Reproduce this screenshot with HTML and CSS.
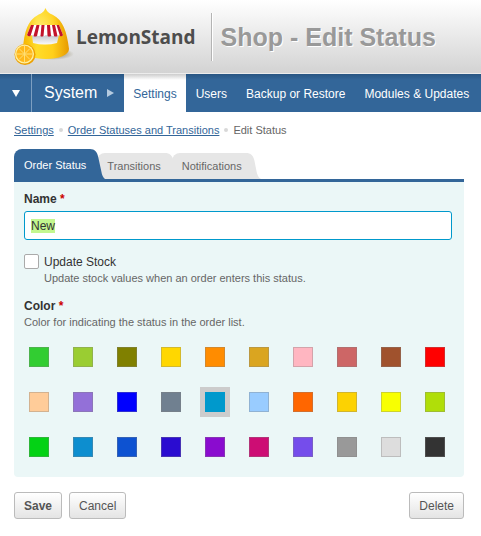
FILE: index.html
```html
<!DOCTYPE html>
<html lang="en">
<head>
<meta charset="utf-8">
<meta name="viewport" content="width=device-width, initial-scale=1">
<title>Shop - Edit Status</title>
<link rel="stylesheet" href="styles.css">
</head>
<body>
<header class="header">
  <a class="brand" href="#">
    <svg class="brand-icon" viewBox="0 5 64 64" aria-hidden="true">
      <defs>
        <linearGradient id="body" x1="0" x2="1" y1="0" y2="0">
          <stop offset="0" stop-color="#f6b400"/>
          <stop offset=".3" stop-color="#ffdc2a"/>
          <stop offset=".65" stop-color="#ffcf1a"/>
          <stop offset="1" stop-color="#e79a00"/>
        </linearGradient>
        <radialGradient id="shine" cx=".4" cy=".35" r=".4">
          <stop offset="0" stop-color="#fff9a8" stop-opacity=".5"/>
          <stop offset="1" stop-color="#fff27a" stop-opacity="0"/>
        </radialGradient>
        <linearGradient id="hatch" x1="0" x2="0" y1="0" y2="1">
          <stop offset="0" stop-color="#c4c4cc"/>
          <stop offset="1" stop-color="#fafafa"/>
        </linearGradient>
        <radialGradient id="shade">
          <stop offset="0" stop-color="#6b6030" stop-opacity=".8"/>
          <stop offset="1" stop-color="#6b6030" stop-opacity="0"/>
        </radialGradient>
      </defs>
      <ellipse cx="41" cy="54" rx="21" ry="6" fill="url(#shade)"/>
      <path d="M33.500 8C35 12 37 13 41 15C51 20 55 32 57 49C57 55 47 59 34 59S11 55 11 49C12 32 16 20 26 15C30 13 32 12 33.500 8Z" fill="url(#body)"/>
      <path d="M33.500 8C35 12 37 13 41 15C51 20 55 32 57 49C57 55 47 59 34 59S11 55 11 49C12 32 16 20 26 15C30 13 32 12 33.500 8Z" fill="url(#shine)"/>
      <path d="M20 35H47L45 43Q33 46 21 43Z" fill="url(#hatch)"/>
      <path d="M19 25H47L51 35Q49 37 47 35Q45 37 43 35Q41 37 39 35Q37 37 34 35Q32 37 29 35Q27 37 24 35Q22 37 20 35Q17 37 15 35Z" fill="#fff"/>
      <path d="M19 25H22L18.500 36Q16.500 37 15 35ZM24.500 25H27.500L25 36Q23 37 21.500 36ZM29.500 25H32.500L31.500 36Q29.500 37 28.500 36ZM35 25H38L39 36Q37 37 35.500 36ZM40 25H43L45.500 36Q43.500 37 42 36ZM44.500 25H47L51 35Q50 37 48 36Z" fill="#c3122b"/>
      <circle cx="13" cy="54.500" r="10.500" fill="#eda000"/>
      <circle cx="12.500" cy="54" r="9.500" fill="#fff0a0"/>
      <circle cx="12.500" cy="54" r="8.200" fill="#ffb81c"/>
      <path d="M12.500 46V62M4.500 54H20.500M7 48.500L18 59.500M18 48.500L7 59.500" stroke="#ffdf75" stroke-width="1"/>
    </svg>
    <span class="brand-name">LemonStand</span>
  </a>
  <h1 class="title">Shop - Edit Status</h1>
</header>
<nav class="nav" aria-label="System">
  <button class="nav-menu" type="button" aria-label="Menu"><svg width="8" height="7" viewBox="0 0 8 7"><path d="M0 0H8L4 7Z" fill="#fff"/></svg></button>
  <a class="nav-section" href="#">System <svg width="7" height="8" viewBox="0 0 7 8"><path d="M0 0L7 4L0 8Z" fill="#b5cbe0"/></svg></a>
  <div class="nav-links">
    <a class="nav-link nav-current" href="#">Settings</a>
    <a class="nav-link" href="#">Users</a>
    <a class="nav-link" href="#">Backup or Restore</a>
    <a class="nav-link" href="#">Modules &amp; Updates</a>
  </div>
</nav>
<main class="main">
  <nav class="crumbs" aria-label="Breadcrumb">
    <a href="#">Settings</a><i class="dot"></i><a href="#">Order Statuses and Transitions</a><i class="dot"></i><span>Edit Status</span>
  </nav>
  <div class="tabs">
    <a class="tab tab-active" href="#"><span class="tab-label">Order Status</span><svg class="tab-tail" viewBox="0 0 16 30" preserveAspectRatio="none"><path d="M0 0C5 0 8 3 9 9L12 22Q13 28 16 30H0Z"/></svg></a>
    <a class="tab" href="#"><span class="tab-label">Transitions</span><svg class="tab-tail" viewBox="0 0 16 30" preserveAspectRatio="none"><path d="M0 0C5 0 8 3 9 9L11 20Q12 28 16 30H0Z"/></svg></a>
    <a class="tab" href="#"><span class="tab-label">Notifications</span><svg class="tab-tail" viewBox="0 0 16 30" preserveAspectRatio="none"><path d="M0 0C5 0 8 3 9 9L11 20Q12 28 16 30H0Z"/></svg></a>
  </div>
  <form>
    <div class="panel">
      <label class="label" for="name">Name <b class="required">*</b></label>
      <input class="text-input" id="name" type="text" value="New" autofocus>
      <div class="check-row">
        <input class="check" id="stock" type="checkbox">
        <div>
          <label class="check-label" for="stock">Update Stock</label>
          <p class="help">Update stock values when an order enters this status.</p>
        </div>
      </div>
      <div class="label" id="color-label">Color <b class="required">*</b></div>
      <p class="help">Color for indicating the status in the order list.</p>
      <div class="swatches" role="radiogroup" aria-labelledby="color-label">
        <input class="swatch" type="radio" name="color" aria-label="#32cd32" style="--c:#32cd32">
        <input class="swatch" type="radio" name="color" aria-label="#9acd32" style="--c:#9acd32">
        <input class="swatch" type="radio" name="color" aria-label="#808000" style="--c:#808000">
        <input class="swatch" type="radio" name="color" aria-label="#ffd700" style="--c:#ffd700">
        <input class="swatch" type="radio" name="color" aria-label="#ff8c00" style="--c:#ff8c00">
        <input class="swatch" type="radio" name="color" aria-label="#daa520" style="--c:#daa520">
        <input class="swatch" type="radio" name="color" aria-label="#ffb6c1" style="--c:#ffb6c1">
        <input class="swatch" type="radio" name="color" aria-label="#cd6666" style="--c:#cd6666">
        <input class="swatch" type="radio" name="color" aria-label="#a0522d" style="--c:#a0522d">
        <input class="swatch" type="radio" name="color" aria-label="#ff0000" style="--c:#ff0000">
        <input class="swatch" type="radio" name="color" aria-label="#ffcc99" style="--c:#ffcc99">
        <input class="swatch" type="radio" name="color" aria-label="#9370d8" style="--c:#9370d8">
        <input class="swatch" type="radio" name="color" aria-label="#0000ff" style="--c:#0000ff">
        <input class="swatch" type="radio" name="color" aria-label="#708090" style="--c:#708090">
        <input class="swatch" type="radio" name="color" aria-label="#0099cc" style="--c:#0099cc" checked>
        <input class="swatch" type="radio" name="color" aria-label="#99ccff" style="--c:#99ccff">
        <input class="swatch" type="radio" name="color" aria-label="#ff6600" style="--c:#ff6600">
        <input class="swatch" type="radio" name="color" aria-label="#fcd202" style="--c:#fcd202">
        <input class="swatch" type="radio" name="color" aria-label="#f8ff01" style="--c:#f8ff01">
        <input class="swatch" type="radio" name="color" aria-label="#b0de09" style="--c:#b0de09">
        <input class="swatch" type="radio" name="color" aria-label="#04d215" style="--c:#04d215">
        <input class="swatch" type="radio" name="color" aria-label="#0d8ecf" style="--c:#0d8ecf">
        <input class="swatch" type="radio" name="color" aria-label="#0d52d1" style="--c:#0d52d1">
        <input class="swatch" type="radio" name="color" aria-label="#2a0cd0" style="--c:#2a0cd0">
        <input class="swatch" type="radio" name="color" aria-label="#8a0ccf" style="--c:#8a0ccf">
        <input class="swatch" type="radio" name="color" aria-label="#cd0d74" style="--c:#cd0d74">
        <input class="swatch" type="radio" name="color" aria-label="#754deb" style="--c:#754deb">
        <input class="swatch" type="radio" name="color" aria-label="#999999" style="--c:#999999">
        <input class="swatch" type="radio" name="color" aria-label="#dddddd" style="--c:#dddddd">
        <input class="swatch" type="radio" name="color" aria-label="#333333" style="--c:#333333">
      </div>
    </div>
    <div class="actions">
      <button class="button primary" type="submit">Save</button>
      <button class="button" type="button">Cancel</button>
      <button class="button delete" type="button">Delete</button>
    </div>
  </form>
</main>
<script src="script.js"></script>
</body>
</html>
```
FILE: styles.css
```css
* {
  box-sizing: border-box;
}

body {
  margin: 0;
  background: #fff;
  color: #333;
  font: 12px/16px "Liberation Sans", Arial, sans-serif;
}

a {
  color: #336699;
}

p {
  margin: 0;
}

.header {
  display: flex;
  align-items: center;
  height: 74px;
  padding-left: 12px;
  background: linear-gradient(#fff, #d3d3d3);
  border-bottom: 1px solid #ececec;
}

.brand {
  display: flex;
  align-items: center;
  color: #4d4d4d;
  text-decoration: none;
}

.brand-icon {
  width: 64px;
  height: 64px;
}

.brand-name {
  font: bold 19px/24px "Open Sans", "Noto Sans", sans-serif;
}

.title {
  margin: 0 0 0 15px;
  padding-left: 9px;
  border-left: 1px solid #b4b4b4;
  box-shadow: inset 1px 0 #fff;
  color: #999;
  font-size: 25px;
  line-height: 48px;
  text-shadow: 1px 1px #fff;
  white-space: nowrap;
}

.nav {
  display: flex;
  height: 38px;
  background: linear-gradient(#285582, #336699 6px);
  white-space: nowrap;
  overflow: hidden;
}

.nav-menu {
  width: 32px;
  padding: 0 0 2px;
  background: none;
  border: 0;
  border-right: 1px solid #7d9fc1;
}

.nav-section {
  display: flex;
  align-items: center;
  gap: 10px;
  padding: 0 10px 0 12px;
  color: #fff;
  font-size: 16px;
  text-decoration: none;
}

.nav-links {
  display: flex;
  gap: 1px;
}

.nav-link {
  padding: 0 9px;
  color: #fff;
  line-height: 40px;
  text-decoration: none;
}

.nav-current {
  background: linear-gradient(#ccc, #fff 6px);
  color: #336699;
}

.main {
  padding: 10px 17px 16px 14px;
}

.crumbs {
  display: flex;
  align-items: center;
  color: #666;
  font-size: 11px;
}

.dot {
  width: 4px;
  height: 4px;
  margin: 0 5px;
  border-radius: 2px;
  background: #d8d8d8;
}

.tabs {
  display: flex;
  align-items: flex-end;
  margin-top: 11px;
  border-bottom: 3px solid #336699;
}

.tab {
  display: flex;
  height: 26px;
  margin-right: -8px;
  color: #666;
  font-size: 11px;
  line-height: 26px;
  text-decoration: none;
}

.tab-label {
  padding: 0 4px 0 10px;
  border-top-left-radius: 8px;
  background: #e6e6e6;
}

.tab-tail {
  width: 15px;
  height: 100%;
  fill: #e6e6e6;
}

.tab-active {
  z-index: 1;
  height: 30px;
  color: #fff;
  line-height: 32px;
}

.tab-active .tab-label {
  background: #336699;
}

.tab-active .tab-tail {
  fill: #336699;
}

.panel {
  padding: 9px 12px 15px 10px;
  border-radius: 0 0 4px 4px;
  background: #ebf7f7;
}

.label {
  display: block;
  font-weight: bold;
}

.required {
  color: #c00;
}

.text-input {
  display: block;
  width: 100%;
  height: 29px;
  margin: 4px 0 14px;
  padding: 0 6px;
  border: 1px solid #0099cc;
  border-radius: 3px;
  outline: 0;
  background: #fff;
  color: #333;
  font: inherit;
}

.text-input::selection {
  background: #c3f78f;
  color: #333;
}

.check-row {
  display: flex;
  gap: 5px;
  margin-bottom: 12px;
}

.check {
  appearance: none;
  width: 15px;
  height: 15px;
  margin: 0;
  border: 1px solid #aaa;
  border-radius: 2px;
  background: #fff;
}

.check:checked {
  background: #336699;
}

.check-label {
  display: block;
}

.help {
  color: #666;
  font-size: 11px;
}

.swatches {
  display: grid;
  grid-template-columns: repeat(10, 30px);
  gap: 15px 14px;
  margin-top: 12px;
}

.swatch {
  appearance: none;
  width: 30px;
  height: 30px;
  margin: 0;
  border: 5px solid transparent;
  background: var(--c) padding-box;
  outline: 1px solid rgba(128, 128, 128, .35);
  outline-offset: -6px;
}

.swatch:checked {
  border-color: #ccc;
  outline: 0;
}

.actions {
  display: flex;
  gap: 7px;
  margin-top: 15px;
}

.button {
  height: 27px;
  padding: 0 9px;
  border: 1px solid #bbb;
  border-radius: 3px;
  background: linear-gradient(#fff, #e4e4e4);
  color: #555;
  font: inherit;
}

.primary {
  font-weight: bold;
}

.delete {
  margin-left: auto;
}
```
FILE: script.js
```js
document.getElementById("name").select();
```
